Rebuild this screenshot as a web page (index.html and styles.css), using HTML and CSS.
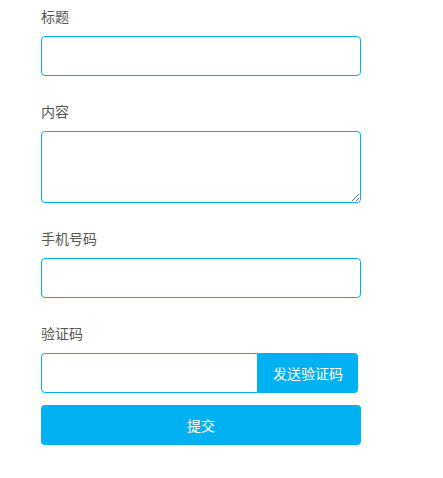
FILE: index.html
```html
<!DOCTYPE html>
<html lang="zh-CN">
<head>
<meta charset="utf-8">
<link rel="stylesheet" href="styles.css">
</head>
<body>
<form class="form">
  <div class="group">
    <label class="label">标题</label>
    <input class="field" type="text">
  </div>
  <div class="group">
    <label class="label">内容</label>
    <textarea class="field area"></textarea>
  </div>
  <div class="group">
    <label class="label">手机号码</label>
    <input class="field" type="text">
  </div>
  <div class="group last">
    <label class="label">验证码</label>
    <div class="code-row">
      <input class="field code" type="text">
      <button type="button" class="send">发送验证码</button>
    </div>
  </div>
  <button type="button" class="submit">提交</button>
</form>
</body>
</html>
```
FILE: styles.css
```css
* { box-sizing: border-box; }
html, body { margin: 0; padding: 0; background: #fff; }
body {
  font-family: "Noto Sans CJK SC", "Microsoft YaHei", sans-serif;
  font-size: 14px;
  color: #555;
}
.form {
  width: 320px;
  margin-left: 41px;
  padding-top: 6px;
}
.group { margin-bottom: 25px; }
.group.last { margin-bottom: 12px; }
.label {
  display: block;
  line-height: 20px;
  height: 20px;
  margin-bottom: 10px;
  color: #555;
}
.field {
  display: block;
  width: 320px;
  height: 40px;
  border: 1px solid #00aeef;
  border-radius: 4px;
  outline: none;
  padding: 0 10px;
  font: inherit;
  background: #fff;
  margin: 0;
}
.area {
  height: 72px;
  padding: 6px 10px;
}
.code-row { display: flex; }
.field.code {
  width: 217px;
  border-radius: 4px 0 0 4px;
}
.send {
  width: 100px;
  height: 40px;
  border: none;
  background: #00b1f1;
  color: #fff;
  font: inherit;
  font-size: 14px;
  border-radius: 0 4px 4px 0;
  padding: 0;
  margin: 0;
}
.submit {
  display: block;
  width: 320px;
  height: 40px;
  border: none;
  background: #00b1f1;
  color: #fff;
  font: inherit;
  font-size: 14px;
  border-radius: 4px;
  padding: 0;
  margin: 0;
}
```
